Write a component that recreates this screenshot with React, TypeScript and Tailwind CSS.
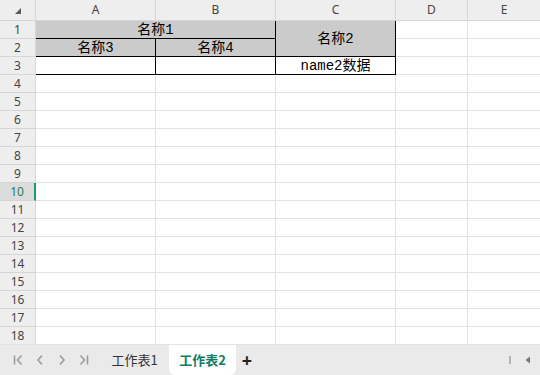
import React from "react";

const cjk = { fontFamily: '"Liberation Mono","Noto Sans CJK SC",monospace' };
const ui = { fontFamily: '"Noto Sans","Noto Sans CJK SC",sans-serif' };

type Cell = { key: string; cls: string; text?: string; align?: string };

function dataCells(r: number): Cell[] {
  const grid = "border-r border-b border-[#e2e2e2]";
  const black = "border-r border-b border-black";
  const cells: Cell[] = [];
  if (r === 1) {
    cells.push({ key: "AB1", cls: `col-span-2 bg-[#cbcbcb] ${black}`, text: "名称1", align: "items-end" });
    cells.push({ key: "C1", cls: `row-span-2 bg-[#cbcbcb] ${black}`, text: "名称2", align: "items-center" });
    cells.push({ key: "D1", cls: grid });
    cells.push({ key: "E1", cls: grid });
  } else if (r === 2) {
    cells.push({ key: "A2", cls: `bg-[#cbcbcb] ${black}`, text: "名称3", align: "items-end" });
    cells.push({ key: "B2", cls: `bg-[#cbcbcb] ${black}`, text: "名称4", align: "items-end" });
    cells.push({ key: "D2", cls: grid });
    cells.push({ key: "E2", cls: grid });
  } else if (r === 3) {
    cells.push({ key: "A3", cls: black });
    cells.push({ key: "B3", cls: black });
    cells.push({ key: "C3", cls: black, text: "name2数据", align: "items-end" });
    cells.push({ key: "D3", cls: grid });
    cells.push({ key: "E3", cls: grid });
  } else {
    ["A", "B", "C", "D", "E"].forEach((c) => cells.push({ key: c + r, cls: grid }));
  }
  return cells;
}

export default function App() {
  const rows = Array.from({ length: 18 }, (_, i) => i + 1);
  return (
    <div className="w-[540px] h-[375px] flex flex-col overflow-hidden bg-white">
      <div className="flex-1 overflow-hidden">
        <div className="grid grid-cols-[36px_120px_120px_120px_72px_73px] grid-rows-[21px_repeat(18,18px)]">
          <div className="bg-[#eeeeee] border-r border-b border-[#d6d6d6] flex items-center justify-center">
            <svg width="8" height="8" viewBox="0 0 8 8" className="mt-[2px] ml-[1px]">
              <polygon points="7,1 7,7 1,7" fill="#5a5a5a" />
            </svg>
          </div>
          {["A", "B", "C", "D", "E"].map((c) => (
            <div
              key={c}
              style={ui}
              className="bg-[#eeeeee] border-r border-b border-[#d6d6d6] flex items-center justify-center text-[12px] text-[#444]"
            >
              {c}
            </div>
          ))}
          {rows.map((r) => (
            <React.Fragment key={r}>
              <div
                style={ui}
                className={
                  r === 10
                    ? "bg-[#dcdcdc] border-b border-[#d6d6d6] border-r-2 border-r-[#1c9a6c] flex items-center justify-center text-[12px] text-[#2b7a60]"
                    : "bg-[#eeeeee] border-r border-b border-[#d6d6d6] flex items-center justify-center text-[12px] text-[#444]"
                }
              >
                {r}
              </div>
              {dataCells(r).map((c) => (
                <div
                  key={c.key}
                  style={cjk}
                  className={`${c.cls} flex justify-center ${c.align ?? ""} text-[14px] leading-[16px] text-black overflow-hidden whitespace-nowrap`}
                >
                  {c.text}
                </div>
              ))}
            </React.Fragment>
          ))}
        </div>
      </div>
      <div className="h-[31px] shrink-0 bg-[#eaeaea] border-t border-[#e2e2e2] flex items-stretch" style={ui}>
        <div className="flex items-center pl-[13px] gap-[12px] w-[100px]">
          <svg width="10" height="12" viewBox="0 0 10 12">
            <path d="M1.5 1.5v9" stroke="#9b9b9b" strokeWidth="1.6" fill="none" />
            <path d="M8.5 1.5 4.5 6l4 4.5" stroke="#9b9b9b" strokeWidth="1.6" fill="none" />
          </svg>
          <svg width="10" height="12" viewBox="0 0 10 12">
            <path d="M7 1.5 3 6l4 4.5" stroke="#9b9b9b" strokeWidth="1.6" fill="none" />
          </svg>
          <svg width="10" height="12" viewBox="0 0 10 12">
            <path d="M3 1.5 7 6l-4 4.5" stroke="#9b9b9b" strokeWidth="1.6" fill="none" />
          </svg>
          <svg width="10" height="12" viewBox="0 0 10 12">
            <path d="M1.5 1.5 5.5 6l-4 4.5" stroke="#9b9b9b" strokeWidth="1.6" fill="none" />
            <path d="M8.5 1.5v9" stroke="#9b9b9b" strokeWidth="1.6" fill="none" />
          </svg>
        </div>
        <div className="flex items-center justify-center w-[69px] text-[13px] text-[#333]" style={{ fontFamily: '"Noto Sans CJK SC",sans-serif' }}>
          工作表1
        </div>
        <div
          className="flex items-center justify-center w-[67px] bg-white rounded-b-[6px] text-[13px] font-bold text-[#0f7d63]"
          style={{ fontFamily: '"Noto Sans CJK SC",sans-serif' }}
        >
          工作表2
        </div>
        <div className="flex items-center justify-center w-[22px] text-[18px] font-bold text-[#222]">+</div>
        <div className="flex-1" />
        <div className="flex items-center gap-[14px] pr-[9px]">
          <div className="w-[2px] h-[8px] bg-[#b4b4b4]" />
          <svg width="6" height="8" viewBox="0 0 6 8">
            <polygon points="5,0.5 5,7.5 0.5,4" fill="#777" />
          </svg>
        </div>
      </div>
    </div>
  );
}
